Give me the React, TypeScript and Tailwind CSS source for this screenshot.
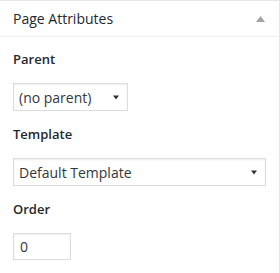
import React from "react";

function Arrow() {
  return (
    <svg width="6" height="5" viewBox="0 0 6 5" className="shrink-0">
      <path d="M0 0.5 H6 L3 4.5 Z" fill="#333333" />
    </svg>
  );
}

function Select({ label, className }: { label: string; className: string }) {
  return (
    <div
      className={`flex h-[28px] items-center justify-between border border-[#dddddd] bg-white pl-[5px] pr-[8px] text-[14px] text-[#32373c] shadow-[inset_0_1px_2px_rgba(0,0,0,0.07)] ${className}`}
    >
      <span>{label}</span>
      <Arrow />
    </div>
  );
}

export default function App() {
  return (
    <div
      className="h-[273px] w-[280px] border-r border-t border-[#e5e5e5] bg-white text-[#23282d]"
      style={{ fontFamily: '"Open Sans", "Noto Sans", sans-serif' }}
    >
      <div className="flex h-[36px] items-center justify-between border-b border-[#eeeeee] pl-[13px] pr-[14px]">
        <h2 className="text-[14px] leading-[19px] text-[#23282d]">Page Attributes</h2>
        <svg width="9" height="6" viewBox="0 0 9 6">
          <path d="M4.5 0 L9 6 H0 Z" fill="#a0a5aa" />
        </svg>
      </div>
      <div className="flex flex-col px-[13px]">
        <p className="mt-[13px] text-[13px] font-semibold leading-[19px]">Parent</p>
        <Select label="(no parent)" className="mt-[14px] w-[115px]" />
        <p className="mt-[14px] text-[13px] font-semibold leading-[19px]">Template</p>
        <Select label="Default Template" className="mt-[14px] w-[253px]" />
        <p className="mt-[14px] text-[13px] font-semibold leading-[19px]">Order</p>
        <div className="mt-[14px] flex h-[27px] w-[58px] items-center border border-[#dddddd] pl-[6px] text-[14px] text-[#32373c] shadow-[inset_0_1px_2px_rgba(0,0,0,0.07)]">
          0
        </div>
      </div>
    </div>
  );
}
